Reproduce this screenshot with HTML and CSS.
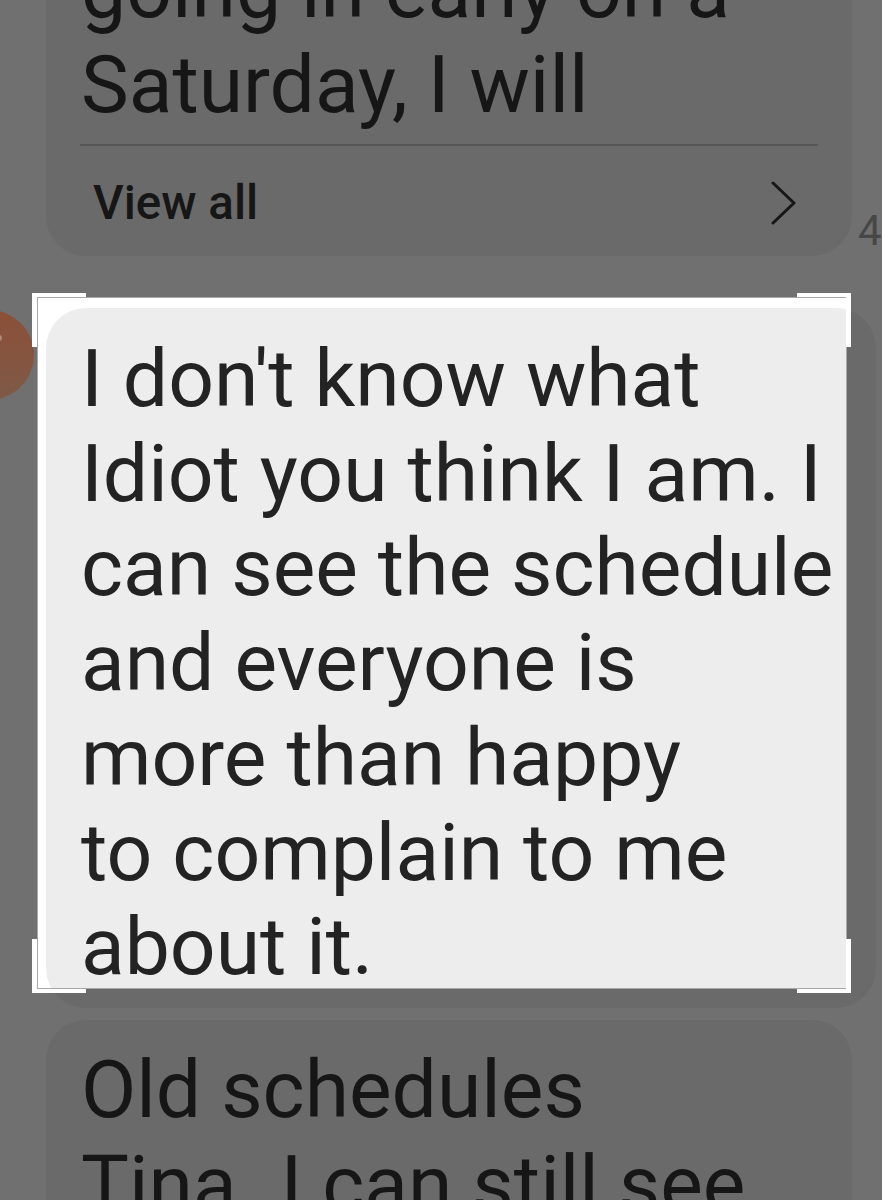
FILE: index.html
```html
<!DOCTYPE html>
<html lang="en">
<head>
<meta charset="utf-8">
<title>Messages</title>
<link rel="stylesheet" href="styles.css">
</head>
<body>
<main class="screen">
  <section class="row row-first">
    <div class="bubble bubble-dim">
      <p class="msg">going in early on a<br>Saturday, I will</p>
      <div class="view-all">
        <span>View all</span>
        <svg class="chevron" viewBox="0 0 28 44" width="28" height="44"><path d="M3 2 L24 22 L3 42" fill="none" stroke="#161616" stroke-width="3" stroke-linecap="round" stroke-linejoin="round"/></svg>
      </div>
    </div>
    <span class="time">4</span>
  </section>

  <section class="row row-selected">
    <div class="avatar"><span class="avatar-spot"></span></div>
    <div class="bubble bubble-under"></div>
    <div class="crop">
      <div class="bubble-bright">
        <p class="msg msg-bright">I don't know what<br>Idiot you think I am. I<br>can see the schedule<br>and everyone is<br>more than happy<br>to complain to me<br>about it.</p>
      </div>
    </div>
    <span class="handle h-tl"></span>
    <span class="handle h-tr"></span>
    <span class="handle h-bl"></span>
    <span class="handle h-br"></span>
  </section>

  <section class="row">
    <div class="bubble bubble-dim bubble-last">
      <p class="msg">Old schedules<br>Tina, <span class="wide-gap">I</span> can still see</p>
    </div>
  </section>
</main>
</body>
</html>
```
FILE: styles.css
```css
* { box-sizing: border-box; }
html, body { margin: 0; padding: 0; }
body { background: #707070; }

.screen {
  width: 882px;
  height: 1200px;
  overflow: hidden;
  background: #707070;
  display: flex;
  flex-direction: column;
  font-family: Roboto, "Liberation Sans", sans-serif;
}

.row { position: relative; padding-left: 46px; display: flex; flex: none; }
.row-first { margin-top: -64px; height: 320px; }
.row-selected { margin-top: 52px; height: 700px; }
.row + .row-selected + .row { margin-top: 12px; }

.bubble { border-radius: 40px; background: #6a6a6a; }
.bubble-dim { width: 806px; padding: 7px 34px 0 34px; }
.bubble-under { width: 830px; height: 700px; }
.bubble-last { height: 300px; padding-top: 23px; }

.msg {
  margin: 0;
  padding-left: 1px;
  font-size: 80.4px;
  line-height: 94.7px;
  color: #161616;
  white-space: nowrap;
}
.msg-bright { color: #232323; padding: 24px 0 0 35px; }
.wide-gap { margin-left: 8px; }

.view-all {
  margin-top: 12px;
  height: 111px;
  border-top: 2px solid #565656;
  display: flex;
  align-items: center;
  justify-content: space-between;
  padding: 5px 20px 0 13px;
  font-size: 47.5px;
  font-weight: 500;
  color: #161616;
}
.chevron { display: block; }

.time {
  align-self: flex-end;
  margin: 0 0 3px 6px;
  font-size: 42px;
  line-height: 44px;
  color: #474747;
}

.avatar {
  position: absolute;
  left: -56px;
  top: 2px;
  width: 90px;
  height: 90px;
  border-radius: 50%;
  background: linear-gradient(#8c4f38, #7e5a47);
}
.avatar-spot {
  position: absolute;
  right: 32px;
  top: 25px;
  width: 5px;
  height: 6px;
  border-radius: 50%;
  background: #b08878;
}

.crop {
  position: absolute;
  left: 37px;
  top: -11px;
  width: 810px;
  height: 692px;
  background: #fff;
  border: 1px solid #a8a8a8;
  overflow: hidden;
}
.bubble-bright {
  width: 830px;
  height: 700px;
  margin: 10px 0 0 8px;
  border-radius: 40px;
  background: #ededed;
}

.handle { position: absolute; width: 54px; height: 54px; border: 0 solid #fff; }
.h-tl { left: 32px; top: -15px; border-width: 4px 0 0 5px; }
.h-tr { left: 797px; top: -15px; border-width: 4px 5px 0 0; }
.h-bl { left: 32px; top: 631px; border-width: 0 0 4px 5px; }
.h-br { left: 797px; top: 631px; border-width: 0 5px 4px 0; }
```
